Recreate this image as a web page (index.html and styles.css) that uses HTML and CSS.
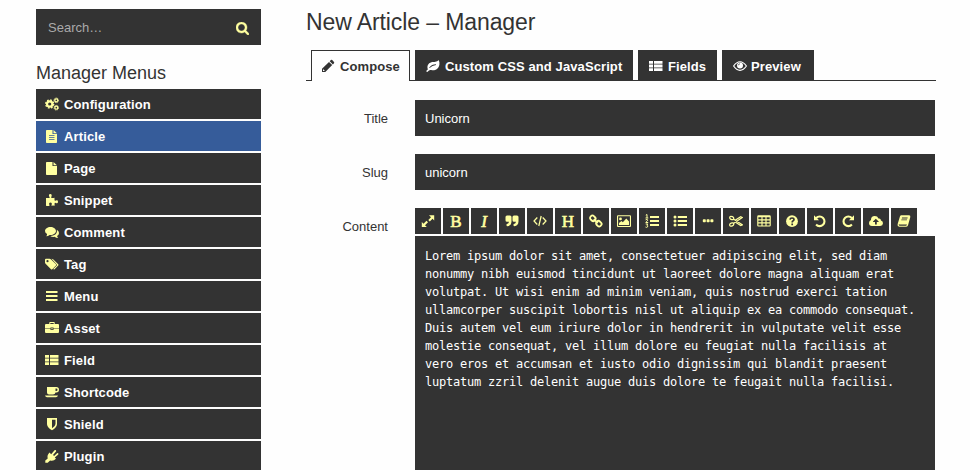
FILE: index.html
```html
<!DOCTYPE html>
<html lang="en">
<head>
<meta charset="utf-8">
<title>New Article – Manager</title>
<link rel="stylesheet" href="styles.css">
</head>
<body>
<svg class="sprite" aria-hidden="true">
  <symbol id="search" viewBox="64 128 1664 1664"><path stroke="currentColor" stroke-width="50" d="M1216 832q0-185-131.500-316.500t-316.500-131.500-316.500 131.500-131.500 316.500 131.500 316.500 316.500 131.500 316.500-131.500 131.500-316.500zm512 832q0 52-38 90t-90 38q-54 0-90-38l-343-342q-179 124-399 124-143 0-273.500-55.500t-225-150-150-225-55.500-273.500 55.500-273.500 150-225 225-150 273.500-55.500 273.500 55.500 225 150 150 225 55.500 273.500q0 220-124 399l343 343q37 37 37 90z"/></symbol>
  <symbol id="cogs" viewBox="0 0 14 14"><g fill="none" stroke="currentColor"><circle cx="4.700" cy="7" r="2.700" stroke-width="2.200"/><circle cx="4.700" cy="7" r="4" stroke-width="1.400" stroke-dasharray="1.700 1.442"/><circle cx="11.300" cy="3.300" r="1.500" stroke-width="1.300"/><circle cx="11.300" cy="3.300" r="2.300" stroke-width=".9" stroke-dasharray="1.100 .706"/><circle cx="11.300" cy="10.700" r="1.500" stroke-width="1.300"/><circle cx="11.300" cy="10.700" r="2.300" stroke-width=".9" stroke-dasharray="1.100 .706"/></g></symbol>
  <symbol id="article" viewBox="0 0 14 14"><path fill-rule="evenodd" d="M1.800 1H7.500V5H12V13.200Q12 14 11.200 14H1.800Q1 14 1 13.200V1.800Q1 1 1.800 1ZM4 6.200V7H9.500V6.200ZM4 8.200V9H9.500V8.200ZM4 10.200V11H9.500V10.200ZM8.500 1L12 4.200H8.500Z"/></symbol>
  <symbol id="page" viewBox="0 0 14 14"><path d="M1.800 1H7.500V5H12V13.200Q12 14 11.200 14H1.800Q1 14 1 13.200V1.800Q1 1 1.800 1ZM8.500 1L12 4.200H8.500Z"/></symbol>
  <symbol id="puzzle" viewBox="0 0 14 14"><path d="M1 5H4.500Q5 4.600 4.300 3.800Q3.200 1 5.300 1Q7.400 1 6.400 3.700Q5.900 4.700 6.500 5Q8 5.200 9.500 4.700V7Q9.600 8.300 10.900 7.500Q13 6.800 13 8.800Q13 10.900 10.900 10.100Q9.800 9.400 9.600 10.300V12.800Q8 12.200 6.600 12.800Q6.200 12.300 6.800 11.300Q7.200 9.500 5.500 9.500Q3.600 9.600 4.200 11.300L4.600 12.700Q3 13.300 1 12.800Z"/></symbol>
  <symbol id="comments" viewBox="0 0 14 14"><path d="M5.500 2C8.500 2 11 3.700 11 6S8.500 10 5.500 10L4.600 9.900Q3 11.200 1.300 11.200Q2 10.500 2.100 9.100Q0 7.800 0 6C0 3.700 2.500 2 5.500 2ZM11.800 4.700Q14 6 14 8Q14 9.800 12.100 11Q12.200 12 13.200 13Q11 13 9.600 11.800Q7 12.200 5.200 10.900C9 11 12.700 8.900 11.800 4.700Z"/></symbol>
  <symbol id="tags" viewBox="0 0 14 14"><path fill-rule="evenodd" d="M0 2.700Q0 1.700 1 1.700H4.500Q5.400 1.700 6.100 2.400L11 7.200Q11.600 7.900 11 8.500L7.300 12.200Q6.600 12.800 6 12.200L.8 7Q0 6.300 0 5.400ZM2.500 3.100A1.100 1.100 0 1 0 2.500 5.300A1.100 1.100 0 0 0 2.500 3.100ZM6.500 1.700Q7.600 1.700 8.400 2.500L13.200 7.300Q13.900 8 13.200 8.600L9.600 12.200Q8.900 12.800 8.200 12L11.800 8.400Q12.200 7.900 11.700 7.400Z"/></symbol>
  <symbol id="bars" viewBox="0 0 14 14"><path d="M1 2H12.500V4H1ZM1 6H12.500V8H1ZM1 10H12.500V12H1Z"/></symbol>
  <symbol id="briefcase" viewBox="0 0 14 14"><path fill-rule="evenodd" d="M4.300 3V1.600Q4.300 1 5 1H9Q9.700 1 9.700 1.600V3H13Q14 3 14 4V7.400H8.500V6.500H5.500V7.400H0V4Q0 3 1 3ZM5.300 2V3H8.700V2ZM0 8H5.500V9H8.500V8H14V11Q14 12 13 12H1Q0 12 0 11ZM6.300 7.200H7.700V8.200H6.300Z"/></symbol>
  <symbol id="thlist" viewBox="0 0 14 14"><path d="M0 2H4V4.700H0ZM5 2H13.500V4.700H5ZM0 5.500H4V8.500H0ZM5 5.500H13.500V8.500H5ZM0 9.300H4V12H0ZM5 9.300H13.500V12H5Z"/></symbol>
  <symbol id="coffee" viewBox="0 0 14 14"><path fill-rule="evenodd" d="M2 2H11.300Q14 2.200 14 4.700Q14 7.300 11.300 7.500H10.500Q10.200 9.500 8 9.500H4Q2 9.500 2 7.500ZM10.500 3.500V6H11.200Q12.500 5.900 12.500 4.700T11.200 3.500ZM0 10.500H13Q12.500 12.300 11 12.300H2Q.5 12.200 0 10.500Z"/></symbol>
  <symbol id="shield" viewBox="0 0 14 14"><path fill-rule="evenodd" d="M2 1H12V7.300Q11.600 10.900 7 13.300Q2.400 10.900 2 7.300ZM7 2.700V11.300Q10.400 9.300 10.500 7V2.700Z"/></symbol>
  <symbol id="plug" viewBox="0 0 14 14"><path d="M4.500 3.500L6.200 5.200L9.500 1.300Q11.200.6 11.200 2.300L8 6L9.100 7.100L12.300 4Q14 3.900 13.300 5.500L9.800 8.500L11 9.700Q8.200 12.700 5.100 11.400L2.700 13.700H.3V11.500L2.700 9.400Q1.800 6.200 4.500 3.500Z"/></symbol>
  <symbol id="pencil" viewBox="0 0 14 14"><path fill-rule="evenodd" d="M8 2.900L11.200 6.100L4.300 13H1V9.700ZM8.700 2.200L9.900 1.100Q10.600.6 11.200 1.100L13 2.900Q13.500 3.500 13 4.200L11.900 5.400ZM2.200 10.300L2 10.800V12H3.200L3.700 11.600Z"/></symbol>
  <symbol id="leaf" viewBox="0 0 14 14"><path fill-rule="evenodd" d="M12.500 1Q13.900 2.800 13.400 5.700C12.600 9.900 9 12 5.200 11.100Q3.900 10.700 3 11.400L1.600 12.800Q.8 13.200.2 12L1.800 10.400Q.1 5 5.400 3.300C8 2.500 11 3.500 12.500 1ZM10 5.200Q5.600 5.200 3.200 8.600L3.600 9Q6.200 6.400 10 6Z"/></symbol>
  <symbol id="eye" viewBox="0 0 14 14"><path d="M.6 7Q3.500 2.700 7 2.700T13.400 7Q10.500 11.300 7 11.300T.6 7Z" fill="none" stroke="currentColor" stroke-width="1.150"/><circle cx="7" cy="6.400" r="3"/><path d="M5.300 6.300Q5.500 4.800 7 4.800" class="cut" stroke-width=".7"/></symbol>
  <symbol id="expand" viewBox="0 0 14 14"><path d="M8 1.300H13.200V6.500L11.500 4.800L8.800 7.500L7.300 6L10 3.300ZM.8 8L2.500 9.700L5.500 6.700L7 8.200L4 11.200L5.800 13H.8Z"/></symbol>
  <symbol id="quote" viewBox="0 0 14 14"><path d="M2 1.500H5Q6.500 1.500 6.500 3V7.500Q6.300 11.800 2.400 12.200Q1.500 12.200 1.500 11.200V10.200Q4 9.600 4 7.800H2Q.5 7.800.5 6.300V3Q.5 1.500 2 1.500ZM9 1.500H12Q13.500 1.500 13.500 3V7.500Q13.300 11.800 9.400 12.200Q8.500 12.200 8.500 11.200V10.200Q11 9.600 11 7.800H9Q7.500 7.800 7.500 6.300V3Q7.500 1.500 9 1.500Z"/></symbol>
  <symbol id="code" viewBox="0 0 14 14"><path d="M4.300 3.500L1 7L4.300 10.500M9.700 3.500L13 7L9.700 10.500M8.200 2L5.800 12" fill="none" stroke="currentColor" stroke-width="1.250"/></symbol>
  <symbol id="link" viewBox="0 0 14 14"><g fill="none" stroke="currentColor" stroke-width="1.800"><rect x="1" y="2" width="5.600" height="4.600" rx="2" transform="rotate(45 3.800 4.300)"/><rect x="7" y="7.400" width="5.600" height="4.600" rx="2" transform="rotate(45 9.800 9.700)"/><path d="M4.800 5.200L8.800 9"/></g></symbol>
  <symbol id="image" viewBox="0 0 14 14"><path fill-rule="evenodd" d="M1 1.200H13Q14 1.200 14 2.200V12Q14 13 13 13H1Q0 13 0 12V2.200Q0 1.200 1 1.200ZM1.100 2.300V11.900H12.900V2.300ZM3.500 3.500A1.400 1.400 0 1 1 3.500 6.300A1.400 1.400 0 0 1 3.500 3.500ZM2 11V9L4.500 6.900L5.800 8.200L9.300 4.600L12 7.400V11Z"/></symbol>
  <symbol id="ol" viewBox="0 0 14 14"><path d="M5 2H14V4H5ZM5 6H14V8H5ZM5 10H14V12H5Z"/><path d="M.8 1.200L2 .5V4M.5 4H3.300M.6 5.900Q2.800 4.600 2.700 6.200Q2.600 7 .7 8.500H3.200M.7 10H2.800L1.800 11.200Q3.300 11.500 2.600 12.900Q1.800 13.800.5 13" fill="none" stroke="currentColor" stroke-width="1"/></symbol>
  <symbol id="ul" viewBox="0 0 14 14"><path d="M4.800 2H14V4H4.800ZM4.800 6H14V8H4.800ZM4.800 10H14V12H4.800Z"/><circle cx="2" cy="3" r="1.500"/><circle cx="2" cy="7" r="1.500"/><circle cx="2" cy="11" r="1.500"/></symbol>
  <symbol id="dots" viewBox="0 0 14 14"><rect x="1.800" y="5.200" width="3" height="3" rx=".8"/><rect x="5.600" y="5.200" width="3" height="3" rx=".8"/><rect x="9.400" y="5.200" width="3" height="3" rx=".8"/></symbol>
  <symbol id="cut" viewBox="0 0 14 14"><g fill="none" stroke="currentColor" stroke-width="1.200"><ellipse cx="2.700" cy="4" rx="2.100" ry="1.500" transform="rotate(25 2.700 4)"/><ellipse cx="2.700" cy="10.500" rx="2.100" ry="1.500" transform="rotate(-25 2.700 10.500)"/><path d="M4.400 5L13.300 10.800L11.700 11.500L7 8.500M4.400 9.500L13.300 3.500L11.700 2.800L6.500 6.100"/></g></symbol>
  <symbol id="table" viewBox="0 0 14 14"><path fill="none" stroke="currentColor" stroke-width="1.150" d="M1.500 1.700H12.500Q13.200 1.700 13.200 2.400V11.300Q13.200 12 12.500 12H1.500Q.8 12 .8 11.300V2.400Q.8 1.700 1.500 1.700ZM.8 2.700H13.200M.8 5.800H13.200M.8 8.900H13.200M5 2V12M9 2V12"/></symbol>
  <symbol id="help" viewBox="0 0 14 14"><circle cx="7" cy="7.200" r="5.900"/><path d="M5 5.600Q5.200 4 7 4Q9 4 9 5.600Q9 6.600 7.900 7.100Q7.200 7.500 7.200 8.500M7.200 9.600V11.200" class="cut" stroke-width="1.700"/></symbol>
  <symbol id="undo" viewBox="0 0 14 14"><path d="M3.200 4A4.800 4.800 0 1 1 3.100 10.500" fill="none" stroke="currentColor" stroke-width="2.100"/><path d="M1 1.200L6 6.200H1Z"/></symbol>
  <symbol id="redo" viewBox="0 0 14 14"><path d="M10.800 4A4.800 4.800 0 1 0 10.900 10.500" fill="none" stroke="currentColor" stroke-width="2.100"/><path d="M13 1.200L8 6.200H13Z"/></symbol>
  <symbol id="cloud" viewBox="0 0 14 14"><path fill-rule="evenodd" d="M3 12Q0 11.800 0 9Q0 6.900 2 6.100Q1.900 2.200 5.800 2.100Q8.500 2.100 9.500 4.500Q11.700 4 12 6.600Q14 7.300 14 9.300Q13.900 11.800 11.200 12ZM6.800 4.800L4 7.600V8H6V10.500H7.800V8H9.700V7.600Z"/></symbol>
  <symbol id="book" viewBox="0 0 14 14"><path fill-rule="evenodd" d="M4.300 1.300H12.200Q13.600 1.400 13.300 2.900L11.100 11Q10.800 12.800 9.200 12.800H2.300Q.1 12.400.6 10.200L3 2.200Q3.400 1.300 4.300 1.300ZM5 3.600L4.800 4.400H10.400L10.700 3.600ZM4.400 5.500L4.200 6.300H9.800L10.100 5.500ZM1.800 10.100Q1.600 11.600 2.600 11.700H9.100Q9.700 11.500 10 10.500L9.400 10.400H2.400Z"/></symbol>
</svg>

<div class="layout">
  <aside class="sidebar">
    <div class="search"><span>Search…</span><svg class="icon"><use href="#search"/></svg></div>
    <h3>Manager Menus</h3>
    <nav class="menu">
      <a><svg class="icon"><use href="#cogs"/></svg>Configuration</a>
      <a class="current"><svg class="icon"><use href="#article"/></svg>Article</a>
      <a><svg class="icon"><use href="#page"/></svg>Page</a>
      <a><svg class="icon"><use href="#puzzle"/></svg>Snippet</a>
      <a><svg class="icon"><use href="#comments"/></svg>Comment</a>
      <a><svg class="icon"><use href="#tags"/></svg>Tag</a>
      <a><svg class="icon"><use href="#bars"/></svg>Menu</a>
      <a><svg class="icon"><use href="#briefcase"/></svg>Asset</a>
      <a><svg class="icon"><use href="#thlist"/></svg>Field</a>
      <a><svg class="icon"><use href="#coffee"/></svg>Shortcode</a>
      <a><svg class="icon"><use href="#shield"/></svg>Shield</a>
      <a><svg class="icon"><use href="#plug"/></svg>Plugin</a>
    </nav>
  </aside>
  <main class="main">
    <h2>New Article – Manager</h2>
    <nav class="tabs">
      <a class="active compose"><svg class="icon"><use href="#pencil"/></svg>Compose</a>
      <a class="custom"><svg class="icon"><use href="#leaf"/></svg>Custom CSS and JavaScript</a>
      <a class="fields"><svg class="icon"><use href="#thlist"/></svg>Fields</a>
      <a class="preview"><svg class="icon"><use href="#eye"/></svg>Preview</a>
    </nav>
    <form class="form">
      <label>Title</label><div class="input">Unicorn</div>
      <label>Slug</label><div class="input">unicorn</div>
      <label>Content</label>
      <div class="editor">
        <div class="toolbar">
          <b><svg class="icon"><use href="#expand"/></svg></b>
          <b class="letter">B</b>
          <b class="letter italic">I</b>
          <b><svg class="icon"><use href="#quote"/></svg></b>
          <b><svg class="icon"><use href="#code"/></svg></b>
          <b class="letter">H</b>
          <b><svg class="icon"><use href="#link"/></svg></b>
          <b><svg class="icon"><use href="#image"/></svg></b>
          <b><svg class="icon"><use href="#ol"/></svg></b>
          <b><svg class="icon"><use href="#ul"/></svg></b>
          <b><svg class="icon"><use href="#dots"/></svg></b>
          <b><svg class="icon"><use href="#cut"/></svg></b>
          <b><svg class="icon"><use href="#table"/></svg></b>
          <b><svg class="icon"><use href="#help"/></svg></b>
          <b><svg class="icon"><use href="#undo"/></svg></b>
          <b><svg class="icon"><use href="#redo"/></svg></b>
          <b><svg class="icon"><use href="#cloud"/></svg></b>
          <b><svg class="icon"><use href="#book"/></svg></b>
        </div>
        <div class="text">Lorem ipsum dolor sit amet, consectetuer adipiscing elit, sed diam
nonummy nibh euismod tincidunt ut laoreet dolore magna aliquam erat
volutpat. Ut wisi enim ad minim veniam, quis nostrud exerci tation
ullamcorper suscipit lobortis nisl ut aliquip ex ea commodo consequat.
Duis autem vel eum iriure dolor in hendrerit in vulputate velit esse
molestie consequat, vel illum dolore eu feugiat nulla facilisis at
vero eros et accumsan et iusto odio dignissim qui blandit praesent
luptatum zzril delenit augue duis dolore te feugait nulla facilisi.</div>
      </div>
    </form>
  </main>
</div>
</body>
</html>
```
FILE: styles.css
```css
* { box-sizing: border-box; }
body {
  margin: 0;
  height: 470px;
  overflow: hidden;
  background: #fefefe;
  color: #333;
  font: 13px/18px "Liberation Sans", Arial, sans-serif;
}
h2, h3 { margin: 0; font-weight: normal; }
.sprite { display: none; }
.icon { width: 14px; height: 14px; flex: none; fill: currentColor; }
.cut { fill: none; stroke: #333; }

.layout {
  display: flex;
  gap: 45px;
  height: 470px;
  padding: 9px 34px 0 36px;
  overflow: hidden;
}
.sidebar { width: 225px; flex: none; }
.search {
  display: flex;
  align-items: center;
  justify-content: space-between;
  height: 36px;
  padding: 2px 12px 0;
  background: #333;
  color: #aaa;
}
.search .icon { width: 13px; height: 13px; color: #ffffa0; }
h3 { margin: 17px 0 5px; font-size: 18px; line-height: 22px; }
.menu { display: flex; flex-direction: column; gap: 2px; }
.menu a {
  display: flex;
  align-items: center;
  gap: 5px;
  height: 30px;
  padding: 1px 9px 0;
  background: #333;
  color: #fff;
  font-weight: bold;
  letter-spacing: .13px;
}
.menu a:last-child { height: 29px; padding-top: 2px; }
.menu .current { background: #365c9a; }
.menu .icon { margin-top: -1px; color: #ffffa0; }

.main { width: 630px; flex: none; }
h2 { font-size: 23px; line-height: 26px; letter-spacing: -.1px; }
.tabs {
  display: flex;
  gap: 5px;
  margin-top: 15px;
  padding-left: 5px;
  height: 31px;
  border-bottom: 1px solid #333;
}
.tabs a {
  display: flex;
  align-items: center;
  gap: 5px;
  height: 30px;
  padding: 3px 0 0 11px;
  background: #333;
  color: #fff;
  font-weight: bold;
  letter-spacing: .1px;
  white-space: nowrap;
}
.tabs .icon { margin-top: -1px; }
.tabs .active {
  height: 31px;
  padding: 1px 0 0 9px;
  border: 1px solid #333;
  border-bottom: 0;
  background: #fefefe;
  color: #333;
}
.compose { width: 99px; }
.custom { width: 218px; }
.fields { width: 79px; }
.preview { width: 92px; }
.preview .icon { margin-right: -1px; }

.form {
  display: grid;
  grid-template-columns: 82px 520px;
  column-gap: 27px;
  row-gap: 18px;
  padding-top: 19px;
}
label { padding-top: 10px; text-align: right; }
.input { height: 36px; padding: 10px; background: #333; color: #fff; }
.toolbar { display: flex; gap: 2px; margin-bottom: 2px; }
.toolbar b {
  display: flex;
  align-items: center;
  justify-content: center;
  width: 26px;
  height: 26px;
  background: #333;
  color: #ffffa0;
}
.toolbar .letter {
  padding-top: 1px;
  font: 17px/26px "Liberation Serif", serif;
  -webkit-text-stroke: .6px #ffffa0;
}
.toolbar .italic { font-style: italic; }
.text {
  height: 234px;
  padding: 11px 10px;
  background: #333;
  color: #fff;
  font: 12px/18px "DejaVu Sans Mono", monospace;
  letter-spacing: -.225px;
  white-space: pre;
}
```
